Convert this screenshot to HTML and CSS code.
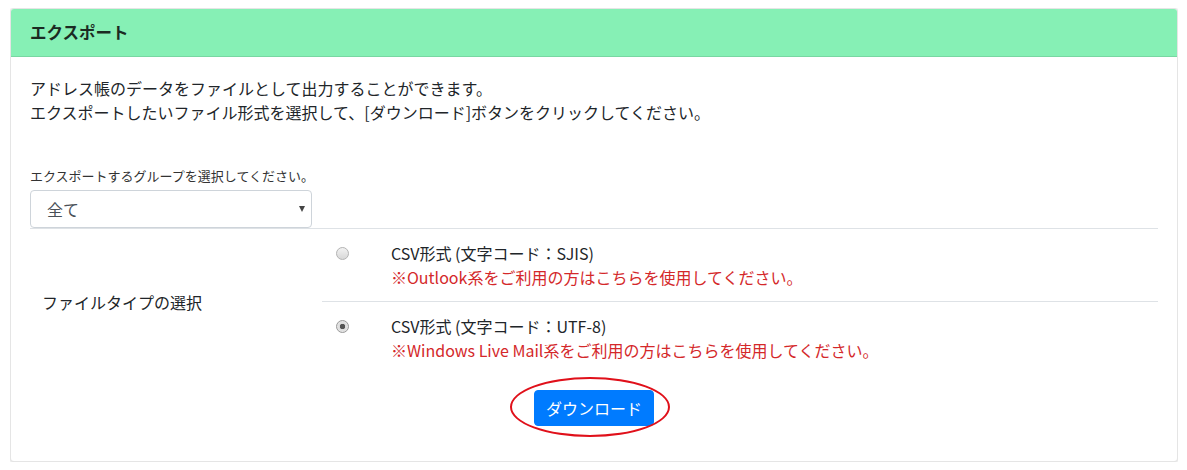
FILE: index.html
```html
<!DOCTYPE html>
<html lang="ja">

<head>
    <meta charset="UTF-8">
    <meta name="viewport" content="width=device-width, initial-scale=1.0">
    <title>エクスポート</title>
    <link rel="stylesheet" href="styles.css">
</head>

<body>
    <div class="card">
        <!-- Card header -->
        <div class="card-header">エクスポート</div>

        <div class="card-body">
            <p class="lead-text">
                アドレス帳のデータをファイルとして出力することができます。<br>
                エクスポートしたいファイル形式を選択して、[ダウンロード]ボタンをクリックしてください。
            </p>

            <form class="export-form">
                <!-- Group select -->
                <label class="group-label" for="group">エクスポートするグループを選択してください。</label>
                <div class="select-wrap">
                    <select id="group" class="group-select">
                        <option>全て</option>
                    </select>
                </div>

                <!-- File type table -->
                <table class="type-table">
                    <tbody>
                        <tr>
                            <td class="type-title" rowspan="2">ファイルタイプの選択</td>
                            <td class="type-radio"><input type="radio" name="type" value="sjis"></td>
                            <td class="type-text">
                                CSV形式 (文字コード：SJIS)<br>
                                <span class="note">※Outlook系をご利用の方はこちらを使用してください。</span>
                            </td>
                        </tr>
                        <tr>
                            <td class="type-radio"><input type="radio" name="type" value="utf8" checked></td>
                            <td class="type-text">
                                CSV形式 (文字コード：UTF-8)<br>
                                <span class="note">※Windows Live Mail系をご利用の方はこちらを使用してください。</span>
                            </td>
                        </tr>
                    </tbody>
                </table>

                <!-- Download button -->
                <div class="button-row">
                    <span class="button-mark">
                        <button type="button" class="btn-download">ダウンロード</button>
                    </span>
                </div>
            </form>
        </div>
    </div>
</body>

</html>
```

FILE: styles.css
```css
/* Basic page styling */
body {
    margin: 8px 9px 0 10px;
    font-family: "Noto Sans CJK JP", sans-serif;
    font-size: 16px;
    line-height: 24px;
    color: #212529;
    background-color: #fff;
}

/* Card */
.card {
    border: 1px solid rgba(0, 0, 0, 0.1);
    border-radius: 4px;
    box-shadow: 0 1px 4px rgba(0, 0, 0, 0.16);
    background-color: #fff;
}

.card-header {
    background-color: #86f0b5;
    border-bottom: 1px solid rgba(0, 0, 0, 0.1);
    border-radius: 3px 3px 0 0;
    padding: 11px 19px 12px;
    font-size: 16.5px;
    font-weight: bold;
    color: #1b2a22;
}

.card-body {
    padding: 19px 19px 17px;
}

.lead-text {
    margin: 0 0 42px;
}

/* Group select */
.group-label {
    display: block;
    font-size: 13px;
    line-height: 19px;
    color: #333;
    margin-bottom: 5px;
}

.select-wrap {
    position: relative;
    width: 282px;
}

.select-wrap::after {
    content: "";
    position: absolute;
    right: 7px;
    top: 16px;
    border-left: 3px solid transparent;
    border-right: 3px solid transparent;
    border-top: 6px solid #444;
    pointer-events: none;
}

.group-select {
    appearance: none;
    -webkit-appearance: none;
    width: 100%;
    height: 38px;
    padding: 0 16px;
    font-family: inherit;
    font-size: 16px;
    color: #495057;
    background-color: #fff;
    border: 1px solid #ced4da;
    border-radius: 4px;
}

/* File type table */
.type-table {
    width: 100%;
    border-collapse: collapse;
}

.type-table td {
    padding: 12px;
    border-top: 1px solid #dee2e6;
    vertical-align: top;
}

.type-title {
    width: 268px;
    vertical-align: middle !important;
}

.type-radio {
    width: 33px;
}

.type-radio input {
    appearance: none;
    -webkit-appearance: none;
    width: 13px;
    height: 13px;
    margin: 5px 0 0 2px;
    border: 1px solid #b4b4b4;
    border-radius: 50%;
    background: linear-gradient(#f2f2f2, #d8d8d8);
}

.type-radio input:checked {
    background: radial-gradient(circle, #555 0 2.5px, #dcdcdc 3px, #eee 100%);
    border-color: #9a9a9a;
}

.note {
    color: #d4282a;
}

/* Download button */
.button-row {
    display: flex;
    justify-content: center;
    margin-top: 16px;
    margin-bottom: 18px;
}

.button-mark {
    position: relative;
    display: inline-block;
}

/* Red circle marking the button */
.button-mark::after {
    content: "";
    position: absolute;
    left: -24px;
    right: -16px;
    top: -13px;
    bottom: -11px;
    border: 2px solid #e0101a;
    border-radius: 50%;
    pointer-events: none;
}

.btn-download {
    font-family: inherit;
    font-size: 16px;
    line-height: 24px;
    padding: 5px 11px;
    color: #fff;
    background-color: #007bff;
    border: 1px solid #007bff;
    border-radius: 4px;
}
```
